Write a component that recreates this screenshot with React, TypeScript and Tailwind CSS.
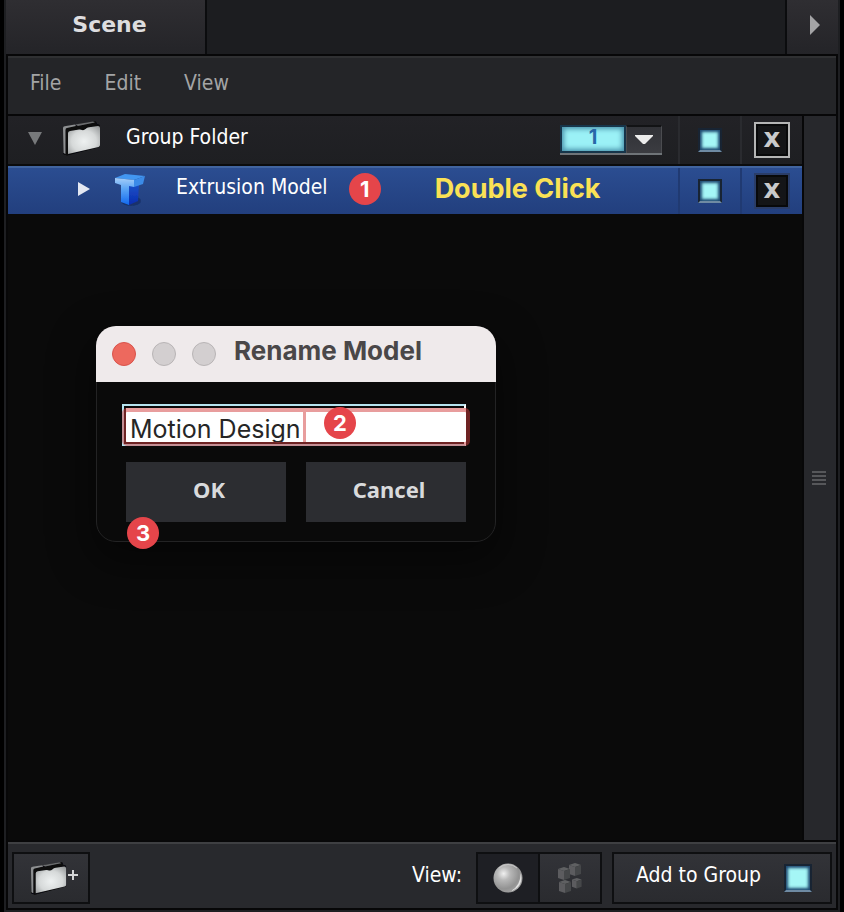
import { useState } from "react";
import type { ReactNode } from "react";

const overlayFont = "font-[Inter,'Liberation_Sans',sans-serif]";

function FolderIcon({ className }: { className: string }) {
  return (
    <svg viewBox="0 0 40 36" className={className} aria-hidden="true">
      <defs>
        <radialGradient id="folderFace" cx="0.5" cy="0.55" r="0.7">
          <stop offset="0" stopColor="#eef1f1" />
          <stop offset="0.55" stopColor="#d6d9d9" />
          <stop offset="1" stopColor="#96999a" />
        </radialGradient>
        <filter id="folderSoft" x="-10%" y="-10%" width="120%" height="120%">
          <feGaussianBlur stdDeviation="0.5" />
        </filter>
      </defs>
      <g filter="url(#folderSoft)">
        <path d="M1 7 L28 2 L34 1.500 L35 4 L38 5 L38 27 L5 35.500 L1 34 Z" fill="#08080a" />
        <path d="M1 8 Q1 6 4 6 L13 4.500 L14 6 L5 8 Q3.500 8 3.500 10 L3.500 34 L1.500 33 Z" fill="#8d8f91" />
        <path d="M13 4.500 L31 1.500 L33 2.500 L16 6 Z" fill="#6a6c6e" />
        <path
          d="M6 13 Q6 11.500 8 11 L17 9.500 Q19 9.300 20 10 Q22 10.500 23.500 9 Q25 7.500 27 7.300 L36 6 Q38 6 38 8 L38 25 Q38 26.500 36.500 27 L6 34 Z"
          fill="url(#folderFace)"
        />
      </g>
    </svg>
  );
}

function ExtrusionIcon() {
  return (
    <svg viewBox="0 0 32 36" className="h-9 w-8 shrink-0" aria-hidden="true">
      <defs>
        <linearGradient id="tFront" x1="0" y1="0" x2="0" y2="1">
          <stop offset="0" stopColor="#a5cdf8" />
          <stop offset="0.4" stopColor="#5ba5f5" />
          <stop offset="1" stopColor="#1268ee" />
        </linearGradient>
        <linearGradient id="tSide" x1="0" y1="0" x2="0" y2="1">
          <stop offset="0" stopColor="#1a52c8" />
          <stop offset="1" stopColor="#0b2cae" />
        </linearGradient>
        <filter id="tSoft" x="-10%" y="-10%" width="120%" height="120%">
          <feGaussianBlur stdDeviation="0.5" />
        </filter>
      </defs>
      <g filter="url(#tSoft)">
        <ellipse cx="17" cy="30" rx="10" ry="5" fill="#11285c" opacity="0.6" />
        <path d="M14 15 L25 13 L24 30 L15 34 Z" fill="url(#tSide)" />
        <path d="M1 7 L11 3 L31 5 L20 9 Z" fill="#4297f2" />
        <path d="M20 9 L31 5 L29 13 L20 16 Z" fill="#3b8be8" />
        <path d="M1 7 L20 9 L20 16 L15 15 L15 34 L7 31 L7 14 L1 12 Z" fill="url(#tFront)" />
      </g>
    </svg>
  );
}

function SphereIcon() {
  return (
    <svg viewBox="0 0 32 32" className="size-8" aria-hidden="true">
      <defs>
        <radialGradient id="sphere" cx="0.35" cy="0.35" r="0.75">
          <stop offset="0" stopColor="#f0f0f0" />
          <stop offset="0.3" stopColor="#b8b8b8" />
          <stop offset="0.7" stopColor="#929292" />
          <stop offset="1" stopColor="#a8a8a8" />
        </radialGradient>
      </defs>
      <circle cx="16" cy="16" r="14.500" fill="url(#sphere)" />
      <path d="M28.500 11 A13.500 13.500 0 0 1 19 29 A19 19 0 0 0 28.500 11Z" fill="#e2e2e2" />
      <path d="M7 6 A13.500 13.500 0 0 1 25 6" fill="none" stroke="#c8c8c8" strokeWidth="1" />
    </svg>
  );
}

function Cube({ x, y, s }: { x: number; y: number; s: number }) {
  return (
    <g transform={`translate(${x} ${y}) scale(${s})`}>
      <path d="M0 2 L6 0 L12 2 L6 4 Z" fill="#5f6062" />
      <path d="M0 2 L6 4 L6 13 L0 11 Z" fill="#5b5c5e" />
      <path d="M6 4 L12 2 L12 11 L6 13 Z" fill="#454648" />
    </g>
  );
}

function CubesIcon() {
  return (
    <svg viewBox="0 0 26 32" className="h-8 w-[26px]" aria-hidden="true">
      <defs>
        <filter id="cubeSoft">
          <feGaussianBlur stdDeviation="0.6" />
        </filter>
      </defs>
      <g filter="url(#cubeSoft)">
        <Cube x={12} y={1} s={1} />
        <Cube x={15} y={16} s={0.8} />
        <Cube x={1} y={5} s={1} />
        <Cube x={2} y={18} s={1} />
      </g>
    </svg>
  );
}

function Badge({ children, className }: { children: ReactNode; className: string }) {
  return (
    <span
      className={`${overlayFont} ${className} flex size-8 items-center justify-center rounded-full bg-[#e5454a] text-[22px] leading-8 font-bold text-white`}
    >
      {children}
    </span>
  );
}

function Toggle({ id, label, className }: { id: string; label: string; className: string }) {
  return (
    <input
      id={id}
      type="checkbox"
      defaultChecked
      aria-label={label}
      className={`${className} shrink-0 appearance-none border-2 border-[#182433] border-b-[#6f8ba3] bg-[#2a4a66] checked:bg-[#a5f6f6] checked:shadow-[inset_0_0_3px_2px_#1f4a72]`}
    />
  );
}

function RowCells({ id, framed, split }: { id: string; framed: boolean; split: string }) {
  return (
    <>
      <div className={`flex w-[62px] shrink-0 items-center justify-center border-l-2 ${split}`}>
        <Toggle id={id} label="Visible" className="size-6" />
      </div>
      <div className={`flex w-[62px] shrink-0 items-center justify-center border-l-2 ${split}`}>
        <button
          aria-label="Remove"
          className={`flex size-9 items-center justify-center border-2 bg-[#141517] pb-1 text-[26px] leading-7 font-bold text-[#c9cacb] shadow-[inset_0_0_0_2px_#08090a] font-['DejaVu_Sans',sans-serif] ${
            framed ? "border-[#b4b5b5]" : "border-[#2a3d68]"
          }`}
        >
          x
        </button>
      </div>
    </>
  );
}

export default function App() {
  const [name, setName] = useState("Motion Design");
  return (
    <div className="h-screen min-h-[640px] bg-black px-1 text-[21px] leading-7 font-['DejaVu_Sans_Condensed','DejaVu_Sans',sans-serif]">
      <div className="relative flex h-full flex-col border-x-2 border-b-2 border-[#1e1f22] bg-[#070708]">
        <div role="tablist" className="flex h-[54px] shrink-0 bg-[#1c1d20]">
          <button
            role="tab"
            aria-selected="true"
            className="w-[201px] border-r-2 border-[#0b0c0e] bg-linear-to-b from-[#2f2e32] to-[#242428] pb-1 pl-2 text-[22px] font-bold text-[#dddddf] font-['DejaVu_Sans',sans-serif]"
          >
            Scene
          </button>
          <button
            aria-label="Next tab"
            className="ml-auto flex w-[53px] items-center justify-center border-l-2 border-[#0b0c0e] bg-linear-to-b from-[#2f2e32] to-[#242428] pb-1 pl-1"
          >
            <svg viewBox="0 0 10 20" className="h-5 w-2.5" aria-hidden="true">
              <path d="M0 0 L10 10 L0 20Z" fill="#a4a4a6" />
            </svg>
          </button>
        </div>

        <nav className="mx-0.5 mt-0.5 flex h-[58px] shrink-0 items-center gap-[43px] border-t-2 border-[#2f3032] bg-[#242528] pb-1.5 pl-[22px] text-[#a3a4a5]">
          <button>File</button>
          <button>Edit</button>
          <button>View</button>
        </nav>

        <div className="mx-0.5 mt-0.5 flex min-h-0 flex-1">
          <main className="flex min-w-0 flex-1 flex-col bg-[#0a0a0a] text-white">
            <div className="flex h-[50px] shrink-0 border-b-2 border-[#0b0c0d] bg-linear-to-b from-[#222226] to-[#1e1f22]">
              <div className="flex min-w-0 flex-1 items-center pl-5">
                <svg viewBox="0 0 14 13" className="mb-1 h-[13px] w-3.5 shrink-0" aria-hidden="true">
                  <path d="M0 0 H14 L7 13Z" fill="#77797b" />
                </svg>
                <FolderIcon className="mb-1 ml-5 h-9 w-10 shrink-0" />
                <span className="ml-6 pb-1.5 whitespace-nowrap">Group Folder</span>
                <div className="relative mr-4 ml-auto h-[30px] w-[102px] shrink-0 border-b-2 border-[#6f7478] bg-linear-to-b from-[#303136] to-[#3b3c41]">
                  <select
                    aria-label="Group number"
                    defaultValue="1"
                    className={`block h-7 w-[66px] appearance-none border-2 border-[#17354a] bg-[#9bf1f6] pb-1 text-center text-[20px] leading-5 font-bold text-[#2767a8] shadow-[inset_0_0_5px_2px_#4a92ac] [text-align-last:center] ${overlayFont}`}
                  >
                    <option>1</option>
                    <option>2</option>
                  </select>
                  <span className="pointer-events-none absolute inset-y-0 right-0 flex w-9 items-center justify-center border-x border-t-2 border-[#4b4c50] border-t-[#121315]">
                    <svg viewBox="0 0 18 10" className="h-2.5 w-[18px]" aria-hidden="true">
                      <path d="M0 0 H18 V1 L10 9 H8 L0 1Z" fill="#ececec" />
                    </svg>
                  </span>
                </div>
              </div>
              <RowCells id="group-visible" framed split="border-[#2a2b2f]" />
            </div>

            <div className="flex h-12 shrink-0 border-t-2 border-[#41649f] bg-linear-to-b from-[#2b4d91] to-[#223f7e]">
              <div className="flex min-w-0 flex-1 items-center pb-1 pl-[70px]">
                <svg viewBox="0 0 12 14" className="h-3.5 w-3 shrink-0" aria-hidden="true">
                  <path d="M0 0 L12 7 L0 14Z" fill="#e4e8f2" />
                </svg>
                <span className="ml-6 flex">
                  <ExtrusionIcon />
                </span>
                <span className="ml-[30px] pb-1 whitespace-nowrap">Extrusion Model</span>
                <Badge className="ml-[21px] shrink-0">1</Badge>
                <span
                  className={`ml-[54px] text-[27px] leading-8 font-bold whitespace-nowrap text-[#fae155] ${overlayFont}`}
                >
                  Double Click
                </span>
              </div>
              <RowCells id="model-visible" framed={false} split="border-[#203a72]" />
            </div>
          </main>
          <aside className="ml-0.5 flex w-8 shrink-0 items-center justify-center bg-[#27282c] pr-0.5">
            <div className="flex w-3.5 flex-col gap-0.5">
              <i className="h-0.5 bg-[#56575a]" />
              <i className="h-0.5 bg-[#56575a]" />
              <i className="h-0.5 bg-[#56575a]" />
              <i className="h-0.5 bg-[#56575a]" />
            </div>
          </aside>
        </div>

        <footer className="mx-0.5 mt-0.5 mb-0.5 flex shrink-0 border-t-2 border-[#3e3f42] bg-[#28292d] px-1 pt-2 pb-1 text-white">
          <button
            aria-label="New group folder"
            className="flex h-[52px] w-[78px] items-center border-2 border-[#0e0f11] bg-linear-to-b from-[#323338] to-[#2a2b2f] pl-4"
          >
            <FolderIcon className="h-9 w-[38px]" />
            <svg viewBox="0 0 10 10" className="mb-1.5 h-2.5 w-2.5" aria-hidden="true">
              <path d="M5 0 V10 M0 5 H10" stroke="#d4d5d6" strokeWidth="2" />
            </svg>
          </button>
          <div className="ml-auto flex items-center">
            <span className="mr-3.5 pb-1.5">View:</span>
            <div className="flex h-[52px] w-[126px] border-2 border-[#0e0f11]">
              <button aria-label="Solid view" className="flex flex-1 items-center justify-center bg-[#1e1f24]">
                <SphereIcon />
              </button>
              <button
                aria-label="Cube view"
                className="flex flex-1 items-center justify-center border-l-2 border-[#0e0f11] bg-linear-to-b from-[#323338] to-[#2a2b2f]"
              >
                <CubesIcon />
              </button>
            </div>
            <label
              htmlFor="add-group"
              className="ml-2.5 flex h-[52px] w-[220px] items-center border-2 border-[#0e0f11] bg-linear-to-b from-[#323338] to-[#2a2b2f] pl-[22px]"
            >
              <span className="pb-1.5 whitespace-nowrap">Add to Group</span>
              <span className="mr-[18px] ml-auto flex">
                <Toggle id="add-group" label="Add to Group" className="size-7" />
              </span>
            </label>
          </div>
        </footer>

        <div
          role="dialog"
          aria-labelledby="rename-title"
          className="absolute top-[326px] left-[90px] h-[216px] w-[400px] rounded-[20px] border border-[#232324] bg-[#0a0a0a] shadow-[0_16px_40px_8px_rgba(0,0,0,0.4)]"
        >
          <div className="-mx-px -mt-px flex h-[56px] items-center rounded-t-[20px] bg-[#efeaeb] pl-4">
            <div className="flex gap-4">
              <button aria-label="Close" className="size-6 rounded-full border border-[#d9534b] bg-[#ed695e]" />
              <button aria-label="Minimize" disabled className="size-6 rounded-full border border-[#b9b5b6] bg-[#d3cfd0]" />
              <button aria-label="Zoom" disabled className="size-6 rounded-full border border-[#b9b5b6] bg-[#d3cfd0]" />
            </div>
            <h2
              id="rename-title"
              className={`ml-[18px] pb-1.5 text-[26px] leading-8 font-bold whitespace-nowrap text-[#4a4748] ${overlayFont}`}
            >
              Rename Model
            </h2>
          </div>
          <form className="mt-[22px] px-[25px]" onSubmit={(e) => e.preventDefault()}>
            <div className="relative">
              <input
                aria-label="Model name"
                value={name}
                onChange={(e) => setName(e.target.value)}
                className={`block h-[42px] w-[344px] border-2 border-[#b5e3ef] border-r-white bg-white pt-2 pl-1.5 text-[25px] leading-7 text-[#262626] shadow-[inset_2px_2px_0_#0a0a0a,inset_0_-2px_0_#0a0a0a] outline-none ${overlayFont}`}
              />
              <span className="pointer-events-none absolute top-1 left-0 h-[38px] w-[348px] rounded-[5px] border-4 border-[#d23c3c]/50" />
              <span className="pointer-events-none absolute top-2 left-[181px] h-[30px] w-[3px] bg-[#d23c3c]/50" />
              <Badge className="absolute top-[3px] left-[202px]">2</Badge>
            </div>
            <div className="mt-4 ml-1 flex gap-5 text-[22px] text-[#d9dadc] font-['Noto_Sans',sans-serif]">
              <button className="h-[60px] w-40 bg-[#2c2d31] pb-1.5 pl-1.5 font-bold">OK</button>
              <button className="h-[60px] w-40 bg-[#2c2d31] pb-1.5 pl-1.5 font-bold">Cancel</button>
            </div>
          </form>
          <Badge className="absolute top-[190px] left-[30px]">3</Badge>
        </div>
      </div>
    </div>
  );
}
